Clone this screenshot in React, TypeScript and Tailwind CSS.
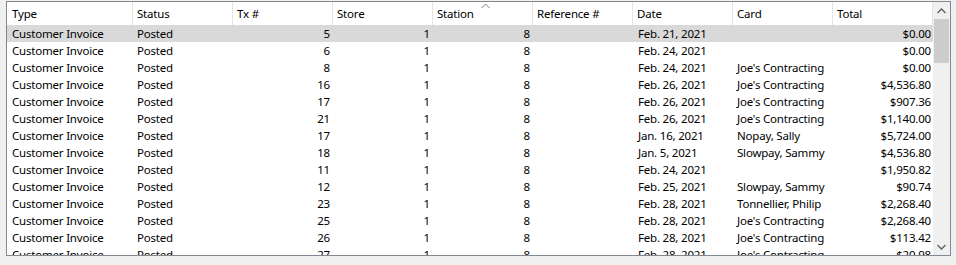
import React from 'react';

type Row = {
  tx: string;
  date: string;
  card: string;
  total: string;
};

const rows: Row[] = [
  { tx: '5', date: 'Feb. 21, 2021', card: '', total: '$0.00' },
  { tx: '6', date: 'Feb. 24, 2021', card: '', total: '$0.00' },
  { tx: '8', date: 'Feb. 24, 2021', card: "Joe's Contracting", total: '$0.00' },
  { tx: '16', date: 'Feb. 26, 2021', card: "Joe's Contracting", total: '$4,536.80' },
  { tx: '17', date: 'Feb. 26, 2021', card: "Joe's Contracting", total: '$907.36' },
  { tx: '21', date: 'Feb. 26, 2021', card: "Joe's Contracting", total: '$1,140.00' },
  { tx: '17', date: 'Jan. 16, 2021', card: 'Nopay, Sally', total: '$5,724.00' },
  { tx: '18', date: 'Jan. 5, 2021', card: 'Slowpay, Sammy', total: '$4,536.80' },
  { tx: '11', date: 'Feb. 24, 2021', card: '', total: '$1,950.82' },
  { tx: '12', date: 'Feb. 25, 2021', card: 'Slowpay, Sammy', total: '$90.74' },
  { tx: '23', date: 'Feb. 28, 2021', card: 'Tonnellier, Philip', total: '$2,268.40' },
  { tx: '25', date: 'Feb. 28, 2021', card: "Joe's Contracting", total: '$2,268.40' },
  { tx: '26', date: 'Feb. 28, 2021', card: "Joe's Contracting", total: '$113.42' },
  { tx: '27', date: 'Feb. 28, 2021', card: "Joe's Contracting", total: '$20.98' },
];

const headers = ['Type', 'Status', 'Tx #', 'Store', 'Station', 'Reference #', 'Date', 'Card', 'Total'];

const App: React.FC = () => {
  return (
    <div
      className="w-[956px] h-[265px] bg-[#f0f0f0] pt-[1px] pl-[6px] overflow-hidden text-[11.5px] tracking-[-0.2px] text-black"
      style={{ fontFamily: '"Noto Sans", "Open Sans", sans-serif' }}
    >
      <div className="w-[945px] h-[255px] border border-[#828790] bg-white flex">
        {/* List */}
        <div className="w-[926px] h-full overflow-hidden flex flex-col">
          {/* Header */}
          <div className="relative flex h-[23px] shrink-0">
            {headers.map((h, i) => (
              <div
                key={h}
                className={`${i === 0 ? 'w-[126px] pl-[5px]' : 'w-[100px] pl-[4px]'} h-full flex items-center border-r border-[#e5e5e5] whitespace-nowrap`}
              >
                {h}
              </div>
            ))}
            <svg className="absolute left-[474px] top-[1px]" width="9" height="6" viewBox="0 0 9 6">
              <path d="M0.5 5 L4.5 1 L8.5 5" fill="none" stroke="#808080" strokeWidth="1" />
            </svg>
          </div>

          {/* Rows */}
          {rows.map((r, i) => (
            <div
              key={i}
              className={`flex h-[17px] shrink-0 items-center whitespace-nowrap ${i === 0 ? 'bg-[#d9d9d9]' : ''}`}
            >
              <div className="w-[126px] pl-[5px]">Customer Invoice</div>
              <div className="w-[100px] pl-[4px]">Posted</div>
              <div className="w-[100px] pr-[3px] text-right">{r.tx}</div>
              <div className="w-[100px] pr-[3px] text-right">1</div>
              <div className="w-[100px] pr-[3px] text-right">8</div>
              <div className="w-[100px]"></div>
              <div className="w-[100px] pl-[5px]">{r.date}</div>
              <div className="w-[100px] pl-[4px]">{r.card}</div>
              <div className="w-[100px] pr-[2px] text-right">{r.total}</div>
            </div>
          ))}
        </div>

        {/* Scrollbar */}
        <div className="w-[17px] h-full bg-[#f0f0f0] flex flex-col">
          <div className="h-[17px] flex items-center justify-center">
            <svg width="9" height="6" viewBox="0 0 9 6">
              <path d="M0.5 5 L4.5 1 L8.5 5" fill="none" stroke="#606060" strokeWidth="1.3" />
            </svg>
          </div>
          <div className="flex-1 px-[1px]">
            <div className="h-[44px] bg-[#cdcdcd]" />
          </div>
          <div className="h-[17px] flex items-center justify-center">
            <svg width="9" height="6" viewBox="0 0 9 6">
              <path d="M0.5 1 L4.5 5 L8.5 1" fill="none" stroke="#606060" strokeWidth="1.3" />
            </svg>
          </div>
        </div>
      </div>
    </div>
  );
};

export default App;
